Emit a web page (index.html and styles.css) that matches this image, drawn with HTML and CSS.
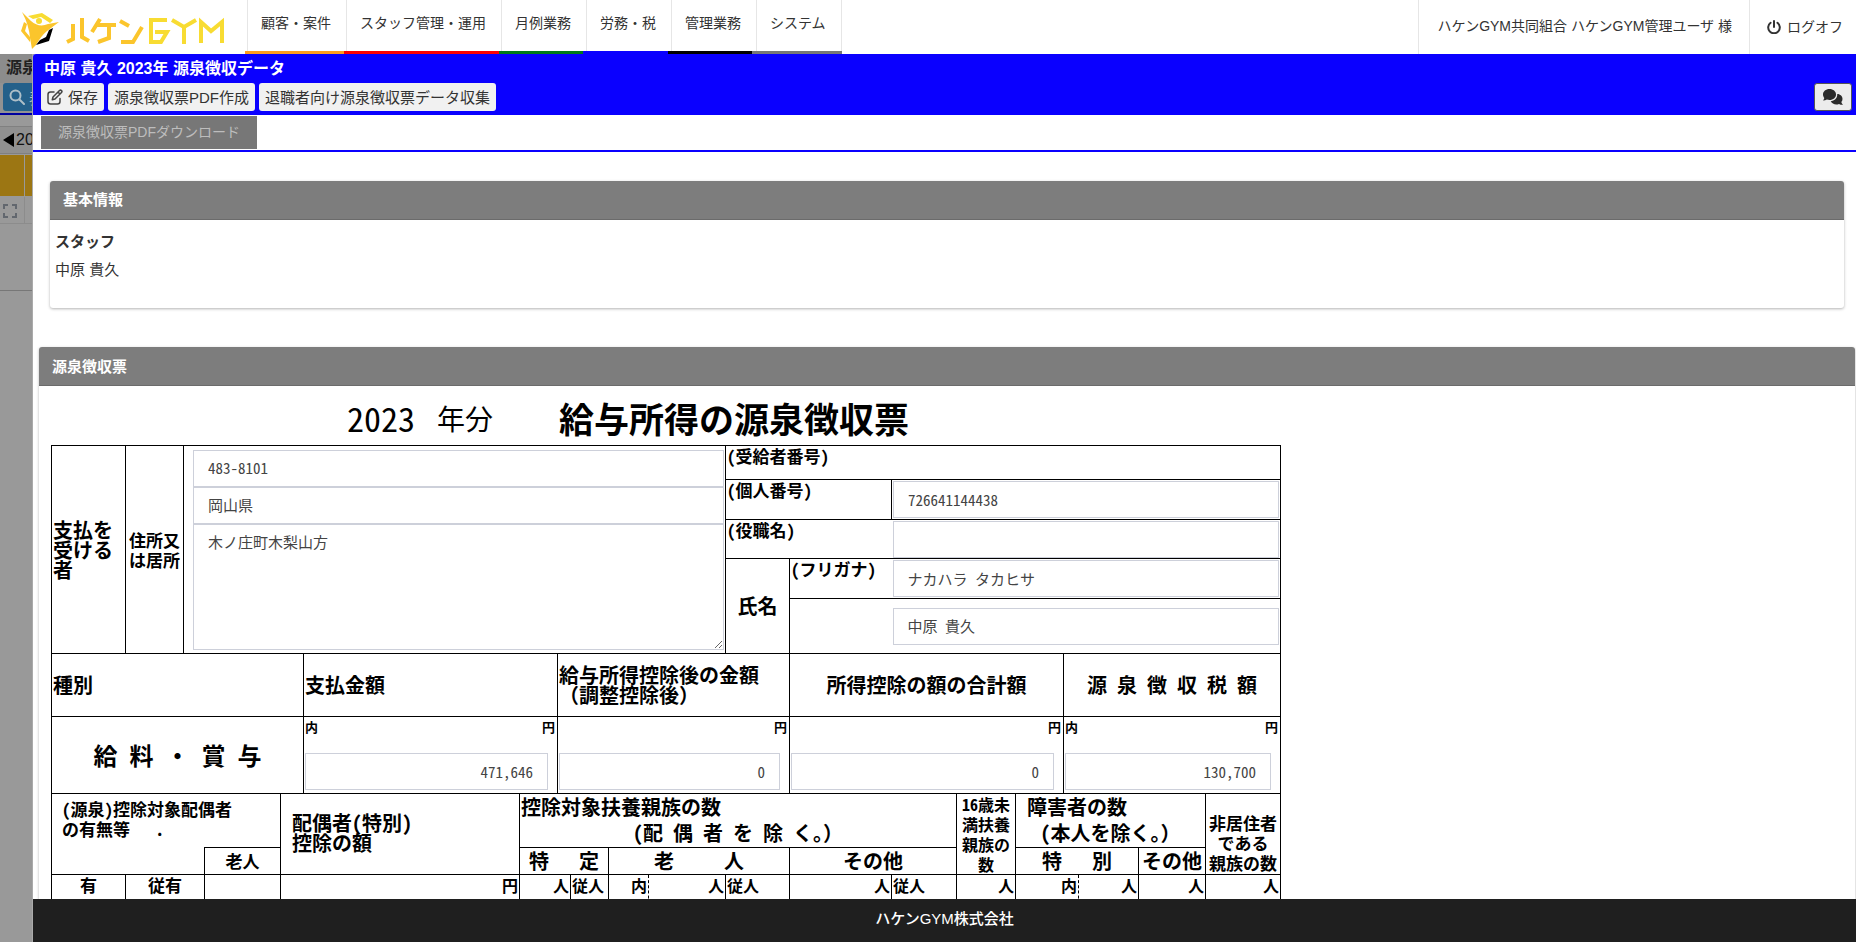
FILE: index.html
```html
<!DOCTYPE html>
<html lang="ja">
<head>
<meta charset="utf-8">
<title>源泉徴収データ</title>
<link rel="stylesheet" href="styles.css">
</head>
<body>
<header class="topbar">
  <a class="logo" href="#" aria-label="ハケンGYM">
    <svg width="206" height="40" viewBox="0 0 206 40" fill="none">
      <path d="M1 0 L10 9 Q18 16 27 12 L38 10 L26 19 Q20 24 15 33 L11 37 L9 26 Q8 13 1 0 Z" fill="#fbc52c"/>
      <circle cx="18" cy="9" r="3" fill="#f8dc32"/>
      <path d="M7 4 L21 1 L32 8 L29 11 L20 5 L12 7 Z" fill="#f8dc32"/>
      <path d="M3 10 L0 19 L9 30 L9 25 L4 19 L6 12 Z" fill="#fbc52c"/>
      <path d="M32 16 L28 29 L15 33 L19 28 L25 25 L28 18 Z" fill="#000"/>
      <g stroke-width="4">
        <path d="M46 30 L52 27 V12 M61 6 V25 L68 29" stroke="#fbc52c"/>
        <path d="M79 7 L71 20 M76 13 H95 M88 13 V26 L77 30" stroke="#fbc52c"/>
        <path d="M99 9 L108 14 M100 30 H112 L121 15" stroke="#fbc52c"/>
        <path d="M146 8 H130 V30 H140 L146 20 H134" stroke="#f8dc32"/>
        <path d="M151 8 L163 15 L175 8 M163 14 V32" stroke="#f8dc32"/>
        <path d="M180 31 V10 L190 19 L201 10 V31" stroke="#f8dc32"/>
      </g>
    </svg>
  </a>
  <nav class="nav">
    <div class="nav-items">
      <a href="#">顧客・案件</a><a href="#">スタッフ管理・運用</a><a href="#">月例業務</a><a href="#">労務・税</a><a href="#">管理業務</a><a href="#">システム</a>
    </div>
    <div class="nav-bars"><i class="orange"></i><i class="red"></i><i class="green"></i><i class="blue"></i><i class="black"></i><i class="gray"></i></div>
  </nav>
  <div class="account">
    <span class="user">ハケンGYM共同組合 ハケンGYM管理ユーザ 様</span>
    <a class="logoff" href="#"><svg width="14" height="14" viewBox="0 0 14 14" fill="none" stroke="#333" stroke-width="2" stroke-linecap="round"><path d="M7 1 V7 M3.600 2.800 A5.800 5.800 0 1 0 10.400 2.800"/></svg>ログオフ</a>
  </div>
</header>
<main class="stage">
  <aside class="under" aria-hidden="true">
    <div class="under-title">源泉徴収</div>
    <div class="under-tools"><span class="under-search"><svg width="16" height="16" viewBox="0 0 16 16" fill="none" stroke="#aebfc8" stroke-width="2" stroke-linecap="round"><circle cx="6.500" cy="6.500" r="5"/><path d="M10.500 10.500 L15 15"/></svg>表示</span></div>
    <div class="under-year"><svg width="11" height="14" viewBox="0 0 11 14"><path d="M11 0 V14 L0 7 Z"/></svg>2023</div>
    <div class="under-head"><i></i><i></i></div>
    <div class="under-row"><span><svg width="14" height="14" viewBox="0 0 14 14" fill="none" stroke="#62676e" stroke-width="2"><path d="M1 5 V1 H5 M9 1 H13 V5 M13 9 V13 H9 M5 13 H1 V9"/></svg></span></div>
    <div class="under-body"></div>
  </aside>
  <section class="modal">
    <div class="modal-head">
      <h1>中原 貴久 2023年 源泉徴収データ</h1>
      <div class="toolbar">
        <button type="button"><svg width="16" height="16" viewBox="0 0 16 16" fill="none" stroke="#444" stroke-width="1.500" stroke-linecap="round" stroke-linejoin="round"><path d="M7 3 H3.500 Q1 3 1 5.500 V12.500 Q1 15 3.500 15 H10.500 Q13 15 13 12.500 V9.500"/><path d="M6 8 L12.500 1.500 Q13.500 .7 14.500 1.600 Q15.400 2.600 14.500 3.500 L8 10 L5.300 10.700 Z M11 3 L13 5"/></svg>保存</button>
        <button type="button">源泉徴収票PDF作成</button>
        <button type="button">退職者向け源泉徴収票データ収集</button>
        <button type="button" class="chat" aria-label="コメント"><svg width="20" height="16" viewBox="0 0 20 16" fill="#2b2b2b"><path d="M6.500 0 C10.200 0 13 2.400 13 5.500 S10.200 11 6.500 11 C5.500 11 4.700 10.800 3.900 10.500 C2.900 11.200 1.600 11.500 0 11.500 C.7 10.700 1.200 9.800 1.300 8.900 C.5 8 0 6.800 0 5.500 C0 2.400 2.800 0 6.500 0 Z"/><path d="M14.200 5 C17.500 5 19.500 7.400 19.500 10 C19.500 11.300 19.100 12.300 18.300 13.100 C18.500 14.100 19.200 15 20 15.800 C18.400 15.900 17 15.500 16 14.900 C12.800 16.200 9 15 7.700 12.200 C11.500 11.800 14.700 9 14.200 5 Z"/></svg></button>
      </div>
    </div>
    <div class="tabs"><button type="button" disabled>源泉徴収票PDFダウンロード</button></div>
    <div class="modal-body">
      <section class="panel basic">
        <h2>基本情報</h2>
        <dl><dt>スタッフ</dt><dd>中原 貴久</dd></dl>
      </section>
      <section class="panel slip">
        <h2>源泉徴収票</h2>
        <div class="slip-body">
          <div class="slip-title"><span class="year">2023</span><span class="nen">年分</span><strong>給与所得の源泉徴収票</strong></div>
          <table class="form">
            <colgroup><col class="w74"><col class="w58"><col class="w21"><col class="w76"><col class="w23"><col class="w216"><col class="w38"><col class="w13"><col class="w38"><col class="w40"><col class="w77"><col class="w64"><col class="w102"><col class="w65"><col class="w59"><col class="w48"><col class="w15"><col class="w60"><col class="w67"><col class="w75"></colgroup>
            <tr class="h34">
              <td rowspan="5" class="t20">支払を受ける者</td>
              <td rowspan="5" class="t17 center">住所又は居所</td>
              <td rowspan="5" colspan="9" class="address"><div class="stack"><input type="text" aria-label="郵便番号" value="483-8101"><input type="text" aria-label="都道府県" value="岡山県"><textarea aria-label="住所">木ノ庄町木梨山方</textarea></div></td>
              <td colspan="9" class="t17 top">(受給者番号)</td>
            </tr>
            <tr class="h40">
              <td colspan="2" class="t17 top"><label for="mynumber">(個人番号)</label></td>
              <td colspan="7" class="field"><input id="mynumber" type="text" value="726641144438"></td>
            </tr>
            <tr class="h39">
              <td colspan="2" class="t17 top open-right"><label for="post">(役職名)</label></td>
              <td colspan="7" class="field open-left"><input id="post" type="text" value=""></td>
            </tr>
            <tr class="h40">
              <td rowspan="2" class="t20 center">氏名</td>
              <td class="t17 top open-right"><label for="kana">(フリガナ)</label></td>
              <td colspan="7" class="field open-left"><input id="kana" type="text" value="ナカハラ タカヒサ"></td>
            </tr>
            <tr class="h55">
              <td class="open-right"></td>
              <td colspan="7" class="field open-left"><input type="text" aria-label="氏名" value="中原 貴久"></td>
            </tr>
            <tr class="h63">
              <td colspan="5" class="t20">種別</td>
              <td colspan="2" class="t20">支払金額</td>
              <td colspan="5" class="t20">給与所得控除後の金額<br>（調整控除後）</td>
              <td colspan="4" class="t20 center">所得控除の額の合計額</td>
              <td colspan="4" class="t20 center">源 泉 徴 収 税 額</td>
            </tr>
            <tr class="h77">
              <td colspan="5" class="t24 center">給 料 ・ 賞 与</td>
              <td colspan="2" class="amount"><div class="unit"><span>内</span><span>円</span></div><input type="text" aria-label="支払金額" value="471,646"></td>
              <td colspan="5" class="amount"><div class="unit"><span></span><span>円</span></div><input type="text" aria-label="給与所得控除後の金額" value="0"></td>
              <td colspan="4" class="amount"><div class="unit"><span></span><span>円</span></div><input type="text" aria-label="所得控除の額の合計額" value="0"></td>
              <td colspan="4" class="amount"><div class="unit"><span>内</span><span>円</span></div><input type="text" aria-label="源泉徴収税額" value="130,700"></td>
            </tr>
            <tr class="h54">
              <td colspan="4" class="t17 spouse open-bottom">(源泉)控除対象配偶者<br>の有無等　 .</td>
              <td colspan="2" rowspan="2" class="t20 indent">配偶者(特別)<br>控除の額</td>
              <td colspan="8" class="t20 wide top">控除対象扶養親族の数<div class="center">(配 偶 者 を 除 く。）</div></td>
              <td rowspan="2" class="t16 center">16歳未満扶養親族の数</td>
              <td colspan="4" class="t20 wide top"><div class="inset">障害者の数</div><div class="center">(本人を除く。）</div></td>
              <td rowspan="2" class="t17 center low">非居住者<br>である<br>親族の数</td>
            </tr>
            <tr class="h27">
              <td colspan="3" class="open-top"></td>
              <td class="t17 center">老人</td>
              <td colspan="3" class="t20 center">特　 定</td>
              <td colspan="3" class="t20 center">老　　 人</td>
              <td colspan="2" class="t20 center">その他</td>
              <td colspan="3" class="t20 center">特　 別</td>
              <td class="t20 center">その他</td>
            </tr>
            <tr class="h40 counts">
              <td class="t17 center">有</td>
              <td colspan="2" class="t17 center">従有</td>
              <td></td>
              <td colspan="2" class="t16 right">円</td>
              <td colspan="2" class="t16 right">人</td>
              <td class="t16">従人</td>
              <td class="t16 right dashed-right">内</td>
              <td class="t16 right dashed-left">人</td>
              <td class="t16">従人</td>
              <td class="t16 right">人</td>
              <td class="t16">従人</td>
              <td class="t16 right">人</td>
              <td colspan="2" class="t16 right dashed-right">内</td>
              <td class="t16 right dashed-left">人</td>
              <td class="t16 right">人</td>
              <td class="t16 right">人</td>
            </tr>
          </table>
        </div>
      </section>
    </div>
    <footer class="footer">ハケンGYM株式会社</footer>
  </section>
</main>
</body>
</html>
```

FILE: styles.css
```css
* { box-sizing: border-box; }
body {
  margin: 0;
  height: 100vh;
  display: flex;
  flex-direction: column;
  overflow: hidden;
  background: #fff;
  color: #333;
  font-family: "Liberation Sans", "Noto Sans CJK JP", sans-serif;
  font-size: 14px;
}
a { color: inherit; text-decoration: none; }
button { font-family: inherit; }

/* top bar */
.topbar { display: flex; height: 54px; flex: none; }
.logo { width: 245px; padding: 12px 0 0 21px; }
.logo svg { display: block; }
.nav { display: flex; flex-direction: column; }
.nav-items { display: flex; flex: 1; margin-left: 2px; border-right: 1px solid #e6e6e6; }
.nav-items a { padding: 0 15px 0 13px; border-left: 1px solid #e6e6e6; line-height: 46px; white-space: nowrap; }
.nav-bars { display: grid; grid-template-columns: 99fr 155fr 84fr 85fr 84fr 90fr; height: 3px; }
.orange { background: #ff9d1e; }
.red { background: #f00; }
.green { background: #007a18; }
.blue { background: #0a00ff; }
.black { background: #000; }
.gray { background: #777; }
.account { display: flex; margin-left: auto; line-height: 52px; white-space: nowrap; }
.user { padding: 0 17px 0 19px; border-left: 1px solid #e6e6e6; }
.logoff { display: flex; align-items: center; gap: 6px; padding: 0 13px 0 17px; border-left: 1px solid #e6e6e6; }

/* dimmed page under the dialog */
.stage { flex: 1; min-height: 0; display: grid; grid-template-columns: 33px 1fr; background: #999; }
.under { overflow: hidden; white-space: nowrap; display: flex; flex-direction: column; border-right: 1px solid #aaa; }
.under-title { height: 29px; padding-left: 6px; line-height: 27px; font-size: 16px; font-weight: bold; background: #8c8c8c; color: #222; }
.under-tools { height: 32px; padding-left: 3px; background: #929292; border-bottom: 2px solid #0000a0; }
.under-search { display: flex; align-items: center; gap: 4px; width: 70px; height: 28px; padding-left: 6px; border-radius: 3px; background: #24608a; color: #aebfc8; font-size: 15px; }
.under-search svg { flex: none; }
.under-year { display: flex; align-items: center; gap: 2px; height: 28px; margin-top: 11px; padding-left: 3px; border: solid #808080; border-width: 1px 0; background: #909090; color: #111; font-size: 16px; }
.under-year svg { flex: none; }
.under-head { display: grid; grid-template-columns: 24px 1fr; gap: 1px; height: 41px; margin-top: 1px; }
.under-head i { background: #9c7613; }
.under-row { height: 27px; margin-top: 1px; border-bottom: 1px solid #8c8c8c; }
.under-row span { display: block; width: 25px; height: 26px; padding: 7px 0 0 3px; border-right: 1px solid #8c8c8c; }
.under-row svg { display: block; }
.under-body { height: 67px; border-bottom: 1px solid #777; }

/* dialog */
.modal { display: flex; flex-direction: column; min-width: 0; min-height: 0; background: #fff; border-radius: 3px 0 0 0; overflow: hidden; }
.modal-head { flex: none; padding: 0 4px 4px 8px; background: #0a00ff; }
.modal-head h1 { margin: 0; padding-left: 3px; line-height: 29px; font-size: 16px; font-weight: bold; color: #fff; }
.toolbar { display: flex; gap: 4px; }
.toolbar button { display: flex; align-items: center; gap: 5px; height: 28px; padding: 0 6px 1px; border: 0; border-radius: 3px; background: #f1f1f1; color: #333; font-size: 15px; white-space: nowrap; }
.toolbar .chat { margin-left: auto; padding: 0 8px; border: 1px solid #555; background: #ececec; }
.tabs { flex: none; height: 37px; padding: 1px 8px 0; border-bottom: 2px solid #0a00ff; }
.tabs button { display: block; height: 33px; padding: 0 17px 4px; border: 0; background: #777; color: #bdbdbd; font-size: 14px; }
.modal-body { flex: 1; min-height: 0; overflow: hidden; padding: 29px 1px 0 6px; }
.footer { flex: none; height: 43px; line-height: 39px; background: #1f1f1f; color: #fff; text-align: center; font-size: 15px; font-weight: 500; }

.panel { border-radius: 3px; box-shadow: 0 1px 3px rgba(0, 0, 0, .3); }
.panel h2 { margin: 0; height: 39px; padding-left: 13px; border-bottom: 1px solid #6b6b6b; border-radius: 3px 3px 0 0; background: #7d7d7d; color: #fff; line-height: 38px; font-size: 15px; font-weight: bold; }
.basic { margin: 0 11px 39px; }
.basic dl { margin: 0; padding: 8px 5px 24px; line-height: 28px; font-size: 15px; }
.basic dt { font-weight: bold; }
.basic dd { margin: 0; }
.slip { font-family: "Noto Sans Mono CJK JP", "Noto Sans CJK JP", monospace; }
.slip-body { padding: 0 12px; color: #000; }
.slip-title { display: flex; align-items: center; height: 59px; padding-top: 5px; padding-left: 296px; font-size: 28px; line-height: 40px; white-space: nowrap; }
.year { font-size: 34px; }
.nen { margin-left: 22px; }
.slip-title strong { margin-left: 66px; font-size: 35px; font-weight: bold; }

/* withholding slip */
.form { width: 1229px; table-layout: fixed; border-collapse: collapse; font-weight: bold; line-height: 20px; }
.form td { padding: 0 1px; border: 1px solid #000; vertical-align: middle; }
.form td.open-right { border-right: 0; }
.form td.open-left { border-left: 0; }
.form td.open-bottom { border-bottom: 0; }
.form td.open-top { border-top: 0; }
.form td.dashed-right { border-right-style: dashed; }
.form td.dashed-left { border-left-style: dashed; }
.w74 { width: 74px; } .w58 { width: 58px; } .w21 { width: 21px; } .w76 { width: 76px; }
.w23 { width: 23px; } .w216 { width: 216px; } .w38 { width: 38px; } .w13 { width: 13px; }
.w40 { width: 40px; } .w77 { width: 77px; } .w64 { width: 64px; } .w102 { width: 102px; }
.w65 { width: 65px; } .w59 { width: 59px; } .w48 { width: 48px; } .w15 { width: 15px; }
.w60 { width: 60px; } .w67 { width: 67px; } .w75 { width: 75px; }
.h27 { height: 27px; } .h34 { height: 34px; } .h39 { height: 39px; } .h40 { height: 40px; }
.h54 { height: 54px; } .h55 { height: 55px; } .h63 { height: 63px; } .h77 { height: 77px; }
.t16 { font-size: 16px; } .t17 { font-size: 17px; } .t20 { font-size: 20px; } .t24 { font-size: 24px; }
.center { text-align: center; }
.right { text-align: right; }
.form td.top { vertical-align: top; }
.form td.low { padding-top: 18px; }
.form td.indent { padding-left: 11px; padding-bottom: 2px; }
.form td.spouse { padding: 5px 0 0 10px; vertical-align: top; }
.inset { padding-left: 10px; }
.wide { line-height: 26px; }
.form .counts td { vertical-align: top; }

.form input, .form textarea {
  display: block;
  width: 100%;
  height: 37px;
  margin: 0;
  padding: 0 14px 1px;
  border: 1px solid #cdd0da;
  border-radius: 0;
  background: #fff;
  color: #444;
  font-family: inherit;
  font-size: 15px;
}
.form textarea { height: 126px; padding-top: 6px; line-height: 22px; resize: both; }
.form td.address { padding: 0 1px 0 9px; }
.form td.field { padding: 0 1px; }
.form td.amount { padding: 0 2px 0 1px; vertical-align: top; }
.amount input { width: calc(100% - 7px); margin-top: 16px; text-align: right; }
.unit { display: flex; justify-content: space-between; height: 20px; font-size: 13px; }
```
